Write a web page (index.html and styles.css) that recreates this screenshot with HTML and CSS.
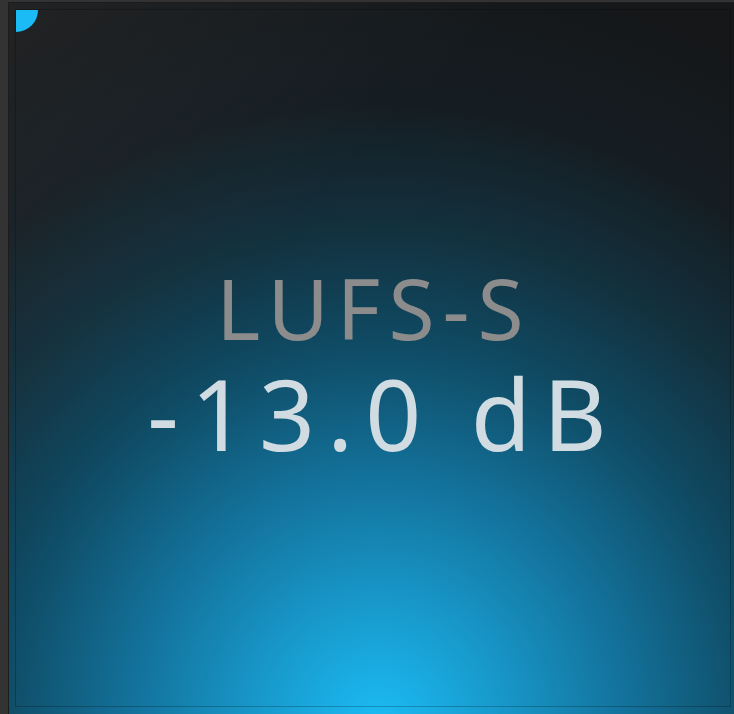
FILE: index.html
```html
<!DOCTYPE html>
<html lang="en">
<head>
  <meta charset="UTF-8">
  <title>LUFS-S Meter</title>
  <link rel="stylesheet" href="styles.css">
</head>
<body>

  <div class="meter-panel">
    <div class="meter-inner">
      <div class="corner-tag"></div>
      <div class="readout">
        <div class="readout-label">LUFS-S</div>
        <div class="readout-value">-13.0 dB</div>
      </div>
    </div>
  </div>

</body>
</html>
```

FILE: styles.css
```css
html, body {
  margin: 0;
  height: 100%;
  overflow: hidden;
  background-color: #333333;
  font-family: "Noto Sans", "DejaVu Sans", sans-serif;
}

body {
  padding: 2px 0 0 8px;
  box-sizing: border-box;
}

.meter-panel {
  width: 740px;
  height: 730px;
  padding: 6px;
  box-sizing: border-box;
  border-top: 1px solid #1c1c1c;
  border-left: 1px solid #1c1c1c;
  background:
    linear-gradient(135deg, rgba(255,255,255,0.05) 0%, rgba(255,255,255,0) 35%),
    radial-gradient(circle at 50% 99%, #1bbcf5 0px, #1899cb 120px, #13719a 250px, #0f4b64 380px, #13303d 500px, #151d22 620px, #151719 760px);
}

.meter-inner {
  position: relative;
  width: 716px;
  height: 698px;
  box-sizing: border-box;
  border: 1px solid rgba(0,0,0,0.22);
  display: flex;
  align-items: center;
  justify-content: center;
}

/* blue quarter circle in the corner */
.corner-tag {
  position: absolute;
  left: 0;
  top: 0;
  width: 22px;
  height: 22px;
  background-color: #1bbcf5;
  border-bottom-right-radius: 100%;
}

.readout {
  text-align: center;
  margin-top: 10px;
}

.readout-label {
  font-size: 84px;
  line-height: 100px;
  color: #8c8c8c;
  letter-spacing: 8px;
  padding-left: 2px;
}

.readout-value {
  font-size: 98px;
  line-height: 111px;
  color: #d0dce2;
  letter-spacing: 12px;
  padding-left: 20px;
}
```
